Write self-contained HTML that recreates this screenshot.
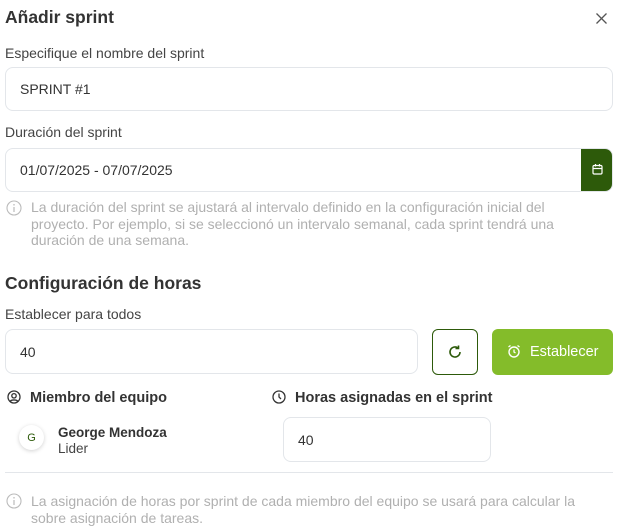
<!DOCTYPE html>
<html><head><meta charset="utf-8"><style>
*{box-sizing:border-box;margin:0;padding:0}
body{width:622px;height:531px;background:#fff;font-family:"Liberation Sans",sans-serif;color:#333;position:relative;overflow:hidden}
.a{position:absolute}
.inp{position:absolute;border:1px solid #e3e6ea;border-radius:8px;background:#fff;font-size:14px;color:#333;padding-left:14px;display:flex;align-items:center}
.lbl{position:absolute;left:5px;font-size:14px;color:#444}
.info{position:absolute;font-size:14px;color:#b0b0b0;line-height:16.5px;white-space:nowrap}
</style></head><body>
<div class="a" style="left:5px;top:7px;font-size:17.5px;font-weight:bold;color:#333">Añadir sprint</div>
<svg class="a" style="left:595px;top:12px" width="13" height="13" viewBox="0 0 13 13"><path d="M1.5 1.5L11.5 11.5M11.5 1.5L1.5 11.5" stroke="#555" stroke-width="1.3"/></svg>
<div class="lbl" style="top:45px">Especifique el nombre del sprint</div>
<div class="inp" style="left:5px;top:67px;width:608px;height:44px">SPRINT #1</div>
<div class="lbl" style="top:124px">Duración del sprint</div>
<div class="inp" style="left:5px;top:148px;width:608px;height:44px;overflow:hidden">01/07/2025 - 07/07/2025
<div class="a" style="right:-1px;top:-1px;width:32px;height:44px;background:#2d5a0a;border-radius:0 8px 8px 0"></div></div>
<svg class="a" style="left:591px;top:163px" width="13" height="13" viewBox="0 0 13 13"><rect x="2" y="2.5" width="9" height="8.5" rx="1.3" fill="none" stroke="#fff" stroke-width="1.2"/><path d="M2 5.5H11M4.5 1V3.5M8.5 1V3.5" stroke="#fff" stroke-width="1.2"/></svg>
<svg class="a" style="left:6px;top:200px" width="16" height="16" viewBox="0 0 16 16"><circle cx="8" cy="8" r="7" fill="none" stroke="#bbb" stroke-width="1.1"/><path d="M8 7V12" stroke="#bbb" stroke-width="1.2"/><circle cx="8" cy="4.8" r=".8" fill="#bbb"/></svg>
<div class="info" style="left:31px;top:199px">La duración del sprint se ajustará al intervalo definido en la configuración inicial del<br>proyecto. Por ejemplo, si se seleccionó un intervalo semanal, cada sprint tendrá una<br>duración de una semana.</div>
<div class="a" style="left:5px;top:273px;font-size:17.5px;font-weight:bold;color:#333">Configuración de horas</div>
<div class="lbl" style="top:306px">Establecer para todos</div>
<div class="inp" style="left:5px;top:329px;width:413px;height:45px">40</div>
<div class="a" style="left:432px;top:329px;width:46px;height:46px;border:1.3px solid #2d5a0a;border-radius:6px"></div>
<svg class="a" style="left:447px;top:344px" width="16" height="16" viewBox="0 0 16 16"><path d="M13 8A5 5 0 1 1 11 4" fill="none" stroke="#2d5a0a" stroke-width="1.6"/><path d="M11.5 1.5V4.5H8.5" fill="none" stroke="#2d5a0a" stroke-width="1.6"/></svg>
<div class="a" style="left:492px;top:329px;width:121px;height:46px;background:#84bc2a;border-radius:6px;color:#fff;font-size:14.5px;display:flex;align-items:center;padding-left:38px">Establecer</div>
<svg class="a" style="left:507px;top:344px" width="14" height="15" viewBox="0 0 14 15"><circle cx="7" cy="8" r="5" fill="none" stroke="#fff" stroke-width="1.4"/><path d="M7 5.5V8L8.5 9M1.5 3L3.5 1.5M12.5 3L10.5 1.5" stroke="#fff" stroke-width="1.3" fill="none"/></svg>
<svg class="a" style="left:7px;top:390px" width="14" height="14" viewBox="0 0 14 14"><circle cx="7" cy="7" r="6" fill="none" stroke="#333" stroke-width="1.3"/><circle cx="7" cy="5.8" r="2.2" fill="none" stroke="#333" stroke-width="1.3"/><path d="M3.2 11.3C4.5 9.5 9.5 9.5 10.8 11.3" fill="none" stroke="#333" stroke-width="1.3"/></svg>
<div class="a" style="left:30px;top:390px;font-size:14.5px;font-weight:bold;color:#333">Miembro del equipo</div>
<svg class="a" style="left:272px;top:390px" width="14" height="14" viewBox="0 0 14 14"><circle cx="7" cy="7" r="6" fill="none" stroke="#333" stroke-width="1.3"/><path d="M7 3.5V7L9 9" fill="none" stroke="#333" stroke-width="1.3"/></svg>
<div class="a" style="left:295px;top:390px;font-size:14.5px;font-weight:bold;color:#333">Horas asignadas en el sprint</div>
<div class="a" style="left:19px;top:425px;width:25px;height:25px;border-radius:50%;background:#fff;box-shadow:0 1px 4px rgba(0,0,0,.18);font-size:11px;color:#2d5a0a;display:flex;align-items:center;justify-content:center">G</div>
<div class="a" style="left:58px;top:425px;font-size:13.5px;font-weight:bold;color:#333">George Mendoza</div>
<div class="a" style="left:58px;top:441px;font-size:13.5px;color:#444">Lider</div>
<div class="inp" style="left:283px;top:417px;width:208px;height:45px">40</div>
<div class="a" style="left:5px;top:472px;width:608px;height:1px;background:#e3e6ea"></div>
<svg class="a" style="left:6px;top:493px" width="16" height="16" viewBox="0 0 16 16"><circle cx="8" cy="8" r="7" fill="none" stroke="#bbb" stroke-width="1.1"/><path d="M8 7V12" stroke="#bbb" stroke-width="1.2"/><circle cx="8" cy="4.8" r=".8" fill="#bbb"/></svg>
<div class="info" style="left:31px;top:493px">La asignación de horas por sprint de cada miembro del equipo se usará para calcular la<br>sobre asignación de tareas.</div>
</body></html>
